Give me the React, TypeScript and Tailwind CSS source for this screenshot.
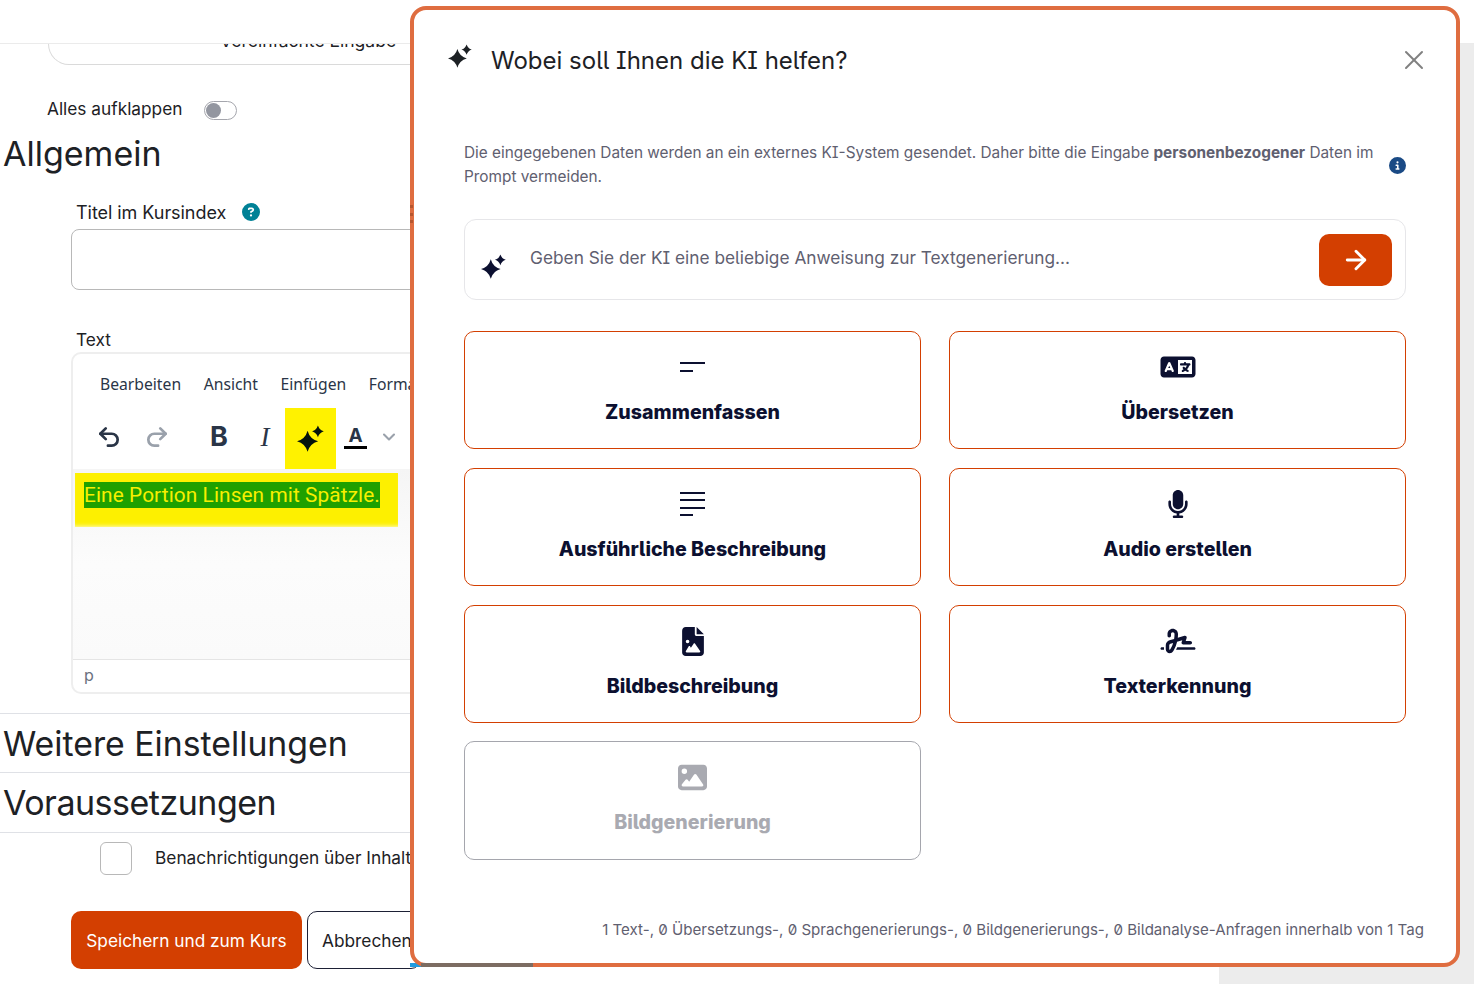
import React from "react";
import { FaLanguage, FaMicrophone, FaFileImage, FaImage, FaSignature, FaCircleInfo, FaCircleQuestion } from "react-icons/fa6";
import { X, ArrowRight, ChevronDown, Undo2, Redo2 } from "lucide-react";

function Sparkle({ className }: { className?: string }) {
  return (
    <svg viewBox="0 0 24 24" className={className} fill="currentColor">
      <path d="M9.4 5 Q11.4 12.4 18.8 14.4 Q11.4 16.4 9.4 23.8 Q7.4 16.4 0 14.4 Q7.4 12.4 9.4 5 Z" />
      <path d="M18.6 0.4 Q19.9 4.3 23.8 5.6 Q19.9 6.9 18.6 10.8 Q17.3 6.9 13.4 5.6 Q17.3 4.3 18.6 0.4 Z" />
    </svg>
  );
}

function Lines({ n }: { n: number }) {
  const widths = n === 2 ? [25, 13] : [25, 25, 25, 13];
  return (
    <div className={n === 2 ? "flex flex-col gap-[6px] w-[25px]" : "flex flex-col gap-[5.2px] w-[25px]"}>
      {widths.map((w, i) => (
        <div key={i} className="h-[2px] bg-[#0c1030]" style={{ width: w }} />
      ))}
    </div>
  );
}

function Card({ icon, label, disabled }: { icon: React.ReactNode; label: string; disabled?: boolean }) {
  return (
    <div
      className={
        disabled
          ? "-mt-[1px] h-[119px] rounded-[10px] border border-[#a5a6ad] flex flex-col items-center text-[#a9aab1]"
          : "h-[118px] rounded-[10px] border border-[#d33f01] flex flex-col items-center text-[#0c1030]"
      }
    >
      <div className="h-[26px] mt-[22px] flex items-center justify-center">{icon}</div>
      <div className="mt-[17px] text-[19.6px] leading-[30px] font-extrabold [font-family:Inter,sans-serif]">{label}</div>
    </div>
  );
}

export default function App() {
  return (
    <div className="relative w-[1474px] h-[984px] overflow-hidden bg-white [font-family:Inter,sans-serif] text-[#1d2125]">
      <div className="flex h-full flex-col">
        <div className="h-[44px] bg-white border-b border-[#ebebeb] shrink-0 relative z-10" />
        <div className="flex flex-1 min-h-0">
          <main className="w-[1219px] shrink-0 overflow-hidden">
            <div className="ml-[48px] h-[21px] w-[700px] border-l border-b border-[#dadada] rounded-bl-[24px] overflow-hidden relative">
              <div className="ml-[171px] -mt-[17px] text-[17.5px] leading-[27px] text-[#1d2125]">Vereinfachte Eingabe</div>
            </div>

            <div className="mt-[31px] ml-[47px] flex items-center h-[26px]">
              <span className="text-[17.3px] leading-[26px]">Alles aufklappen</span>
              <div className="ml-[21px] mt-[3px] w-[33px] h-[19px] rounded-full border border-[#a5a6ad] flex items-center pl-[1px]">
                <div className="w-[15px] h-[15px] rounded-full bg-[#9396a0]" />
              </div>
            </div>

            <h2 className="ml-[3px] mt-[7px] text-[34px] leading-[50px] [font-family:Inter,sans-serif]">Allgemein</h2>

            <div className="ml-[76px] mt-[20px] flex items-center h-[26px]">
              <span className="text-[18px] tracking-[-0.05px]">Titel im Kursindex</span>
              <FaCircleQuestion className="ml-[16px] text-[#008196] w-[18px] h-[18px]" />
            </div>
            <div className="ml-[71px] mt-[4px] w-[700px] h-[61px] border border-[#b8b8b8] rounded-[8px]" />

            <div className="ml-[76px] mt-[37px] h-[26px] text-[17.3px] leading-[26px]">Text</div>

            <div className="ml-[71px] w-[700px] h-[342px] -mt-[1px] border-2 border-[#eeeeee] rounded-[10px] flex flex-col overflow-hidden">
              <div className="h-[115px] shrink-0 flex flex-col">
                <div className="flex gap-[22.6px] ml-[27px] mt-[18px] text-[15.7px] leading-[24px] text-[#2a3547] [font-family:'Noto_Sans',sans-serif]">
                  <span>Bearbeiten</span>
                  <span>Ansicht</span>
                  <span>Einfügen</span>
                  <span>Format</span>
                </div>
                <div className="flex items-center h-[62px] mt-[10px]">
                  <Undo2 className="ml-[23px] w-[26px] h-[26px] text-[#2a3547]" strokeWidth={2.5} />
                  <Redo2 className="ml-[22px] w-[26px] h-[26px] text-[#9aa1ab]" strokeWidth={2.5} />
                  <span className="ml-[38px] w-[22px] text-center text-[27px] font-bold text-[#2a3547] [font-family:Inter,sans-serif]">B</span>
                  <span className="ml-[24px] w-[22px] text-center text-[27px] italic text-[#2a3547] [font-family:'Liberation_Serif',serif]">I</span>
                  <div className="ml-[9px] w-[51px] h-[65px] mt-[7px] bg-[#fff200] flex items-center justify-center pb-[5px]">
                    <Sparkle className="w-[27px] h-[27px] text-[#04140c]" />
                  </div>
                  <div className="ml-[8px] w-[23px] flex flex-col items-center">
                    <span className="text-[19px] leading-[20px] font-bold text-[#2a3547]">A</span>
                    <div className="h-[3px] w-[23px] bg-black" />
                  </div>
                  <ChevronDown className="ml-[12px] w-[20px] h-[20px] text-[#9aa1ab]" strokeWidth={2.5} />
                </div>
              </div>
              <div className="flex-1 bg-gradient-to-b from-[#f5f5f5] via-[#fcfcfc] to-[#fafafa] pt-[4px] pl-[2px]">
                <div className="w-[323px] h-[54px] bg-[#fdf000] shadow-[inset_0_-4px_5px_-4px_#ffffff] pl-[9px] pt-[9px]">
                  <span className="inline-block bg-[#1fa000] text-[#f8ef00] text-[20.8px] leading-[26px] [font-family:Roboto,sans-serif] tracking-[0.1px] whitespace-nowrap">Eine Portion Linsen mit Spätzle.</span>
                </div>
              </div>
              <div className="h-[33px] shrink-0 border-t border-[#e5e5e5] pl-[11px] text-[16px] leading-[30px] text-[#6b7280]">p</div>
            </div>

            <div className="mt-[19px] border-t border-[#dfe1e6] h-[59px] flex items-center pl-[3px] pt-[2px]">
              <h2 className="text-[33.8px] leading-[50px] [font-family:Inter,sans-serif]">Weitere Einstellungen</h2>
            </div>
            <div className="border-t border-[#dfe1e6] h-[60px] flex items-center pl-[3px]">
              <h2 className="text-[34px] leading-[50px] tracking-[-0.5px] [font-family:Inter,sans-serif]">Voraussetzungen</h2>
            </div>
            <div className="border-t border-[#dfe1e6] pt-[9px] pl-[100px] flex items-start">
              <div className="w-[32px] h-[33px] border border-[#b8b8b8] rounded-[6px]" />
              <span className="ml-[23px] text-[17.3px] leading-[32px] whitespace-nowrap">Benachrichtigungen über Inhaltsänderung</span>
            </div>
            <div className="mt-[36px] ml-[71px] flex gap-[5px]">
              <button className="w-[231px] h-[58px] bg-[#d33f01] text-white rounded-[10px] text-[17.3px] pt-[2px]">Speichern und zum Kurs</button>
              <button className="w-[114px] h-[58px] border border-[#1d2035] rounded-[10px] text-left pl-[14px] pt-[2px] text-[17.3px]">Abbrechen</button>
            </div>
          </main>
          <aside className="flex-1 bg-[#ececec]" />
        </div>
      </div>

      <div className="absolute left-[410px] top-[963px] w-[12px] h-[4px] bg-[#1f9be0] z-10" />

      <div className="absolute left-[410px] top-[6px] w-[1050px] h-[961px] bg-white border-[4px] border-[#df6d40] rounded-[16px] flex flex-col [font-feature-settings:'ss02'] z-20">
        <div className="flex items-start mt-[34px] ml-[34px]">
          <Sparkle className="w-[24px] h-[24px] text-[#1d2125]" />
          <h1 className="ml-[19px] text-[24px] leading-[34px] [font-family:Inter,sans-serif] text-[#1d2125]">Wobei soll Ihnen die KI helfen?</h1>
          <X className="ml-auto mr-[26px] w-[32px] h-[32px] text-[#808080]" strokeWidth={1.5} />
        </div>

        <div className="ml-[50px] mr-[50px] mt-[63px] flex items-center gap-[15px]">
          <p className="flex-1 text-[15.36px] leading-[24px] text-[#5f6070]">
            Die eingegebenen Daten werden an ein externes KI-System gesendet. Daher bitte die Eingabe <b className="font-bold">personenbezogener</b> Daten im Prompt vermeiden.
          </p>
          <FaCircleInfo className="w-[17px] h-[17px] text-[#1a4a85] shrink-0" />
        </div>

        <div className="ml-[50px] mr-[50px] mt-[30px] h-[81px] border border-[#e6e6e9] rounded-[12px] flex items-center pl-[16px] pr-[13px]">
          <Sparkle className="w-[25px] h-[25px] text-[#0c1030] mt-[14px]" />
          <span className="ml-[24px] text-[17.3px] leading-[28px] text-[#5f6070] -mt-[3px] flex-1 whitespace-nowrap">Geben Sie der KI eine beliebige Anweisung zur Textgenerierung...</span>
          <div className="w-[73px] h-[52px] bg-[#d33f01] rounded-[10px] flex items-center justify-center">
            <ArrowRight className="w-[30px] h-[30px] text-white" strokeWidth={2.3} />
          </div>
        </div>

        <div className="ml-[50px] mr-[50px] mt-[31px] grid grid-cols-2 gap-x-[28px] gap-y-[19px]">
          <Card label="Zusammenfassen" icon={<Lines n={2} />} />
          <Card label="Übersetzen" icon={<FaLanguage className="w-[36px] h-[28px]" />} />
          <Card label="Ausführliche Beschreibung" icon={<Lines n={4} />} />
          <Card label="Audio erstellen" icon={<FaMicrophone className="w-[26px] h-[28px]" />} />
          <Card label="Bildbeschreibung" icon={<FaFileImage className="w-[22px] h-[29px]" />} />
          <Card label="Texterkennung" icon={<FaSignature className="w-[36px] h-[28px]" />} />
          <Card disabled label="Bildgenerierung" icon={<FaImage className="w-[29px] h-[29px]" />} />
        </div>

        <div className="mt-auto mb-[22px] mr-[32px] text-right text-[15.1px] leading-[22px] text-[#5f6070]">
          1 Text-, 0 Übersetzungs-, 0 Sprachgenerierungs-, 0 Bildgenerierungs-, 0 Bildanalyse-Anfragen innerhalb von 1 Tag
        </div>
      </div>

      <div className="absolute left-[421px] top-[963px] w-[112px] h-[4px] bg-[#7c6c62] z-30" />
      <div className="absolute left-[410px] top-[205px] w-[3px] h-[18px] border-y-[3px] border-[#b5562f] z-30 flex items-center">
        <div className="w-full h-[3px] bg-[#b5562f]" />
      </div>
    </div>
  );
}
